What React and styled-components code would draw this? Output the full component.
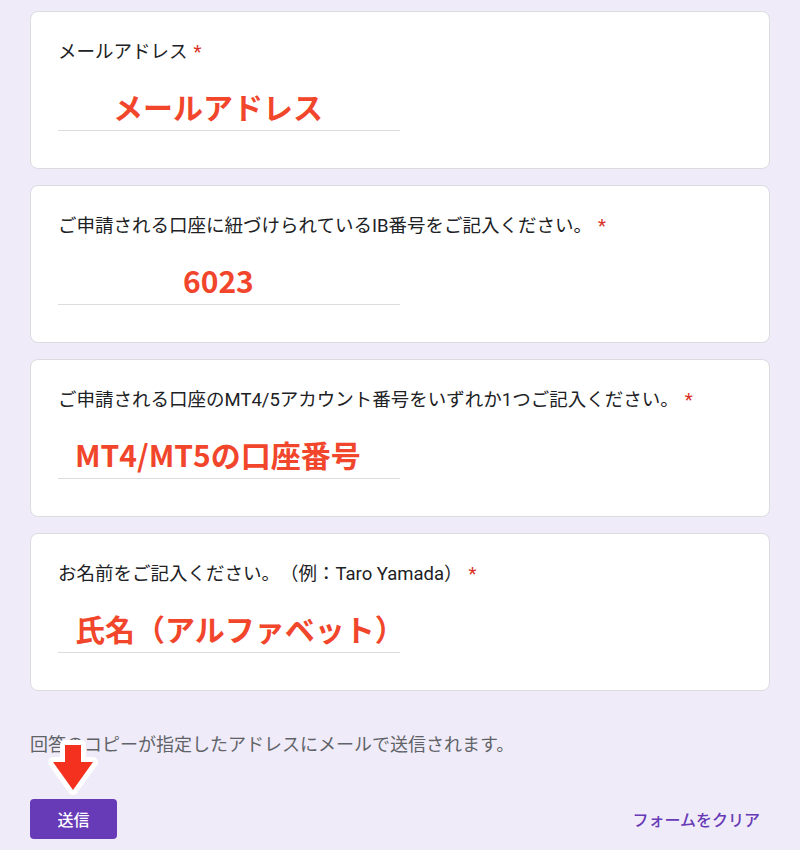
import React from "react";
import styled, { createGlobalStyle } from "styled-components";

const GlobalStyle = createGlobalStyle`
	html, body {
		margin: 0;
		padding: 0;
		background: #f0ebf8;
	}
	body {
		font-family: Roboto, "Noto Sans CJK JP", sans-serif;
		text-spacing-trim: space-all;
	}
`;

const Page = styled.div`
	width: 800px;
	box-sizing: border-box;
	padding: 11px 30px 10px;
	display: flex;
	flex-direction: column;
	gap: 16px;
`;

const Card = styled.div`
	background: #fff;
	border: 1px solid #dadce0;
	border-radius: 8px;
	padding: 28px 27px 37px;
	display: flex;
	flex-direction: column;
`;

const Label = styled.div`
	font-size: 18.5px;
	line-height: 24px;
	color: #202124;
	white-space: nowrap;
`;

const Required = styled.span`
	color: #d93025;
	margin-left: 6px;
`;

const Answer = styled.div`
	margin-top: 22px;
	width: 342px;
	border-bottom: 1px solid #dadce0;
	padding-bottom: 4px;
	padding-left: ${(p) => p.$indent}px;
	box-sizing: border-box;
`;

const Value = styled.div`
	font-family: "Noto Sans CJK JP", sans-serif;
	font-weight: 700;
	font-size: 30px;
	line-height: 40px;
	color: #f1462b;
	white-space: nowrap;
`;

const Footer = styled.div`
	position: relative;
	margin-top: 26px;
	display: flex;
	flex-direction: column;
	gap: 42px;
`;

const Note = styled.div`
	font-size: 18px;
	line-height: 24px;
	color: #5f6368;
`;

const Actions = styled.div`
	display: flex;
	justify-content: space-between;
	align-items: center;
`;

const SubmitButton = styled.button`
	width: 87px;
	height: 40px;
	border: none;
	border-radius: 4px;
	background: #673ab7;
	color: #fff;
	font-family: Roboto, "Noto Sans CJK JP", sans-serif;
	font-size: 16px;
	font-weight: 500;
	padding: 0;
`;

const ClearButton = styled.button`
	border: none;
	background: transparent;
	color: #673ab7;
	font-family: Roboto, "Noto Sans CJK JP", sans-serif;
	font-size: 16px;
	font-weight: 500;
	padding: 0 10px;
	height: 40px;
`;

const Arrow = styled.svg`
	position: absolute;
	left: 15px;
	top: 0;
	overflow: visible;
`;

const questions = [
	{ label: "メールアドレス", value: "メールアドレス", indent: 55 },
	{ label: "ご申請される口座に紐づけられているIB番号をご記入ください。", value: "6023", indent: 125 },
	{ label: "ご申請される口座のMT4/5アカウント番号をいずれか1つご記入ください。", value: "MT4/MT5の口座番号", indent: 17 },
	{ label: "お名前をご記入ください。（例：Taro Yamada）", value: "氏名（アルファベット）", indent: 17 },
];

export default function App() {
	return (
		<>
			<GlobalStyle />
			<Page>
				{questions.map((q) => (
					<Card key={q.label}>
						<Label>
							{q.label}
							<Required>*</Required>
						</Label>
						<Answer $indent={q.indent}>
							<Value>{q.value}</Value>
						</Answer>
					</Card>
				))}
				<Footer>
					<Note>回答のコピーが指定したアドレスにメールで送信されます。</Note>
					<Actions>
						<SubmitButton>送信</SubmitButton>
						<ClearButton>フォームをクリア</ClearButton>
					</Actions>
					<Arrow width="56" height="64" viewBox="0 0 56 64">
						<path
							d="M20 12 H36 V29 H48 L28 57 L8 29 H20 Z"
							fill="#f4301f"
							stroke="#fff"
							strokeWidth="10"
							strokeLinejoin="round"
							paintOrder="stroke"
						/>
					</Arrow>
				</Footer>
			</Page>
		</>
	);
}
